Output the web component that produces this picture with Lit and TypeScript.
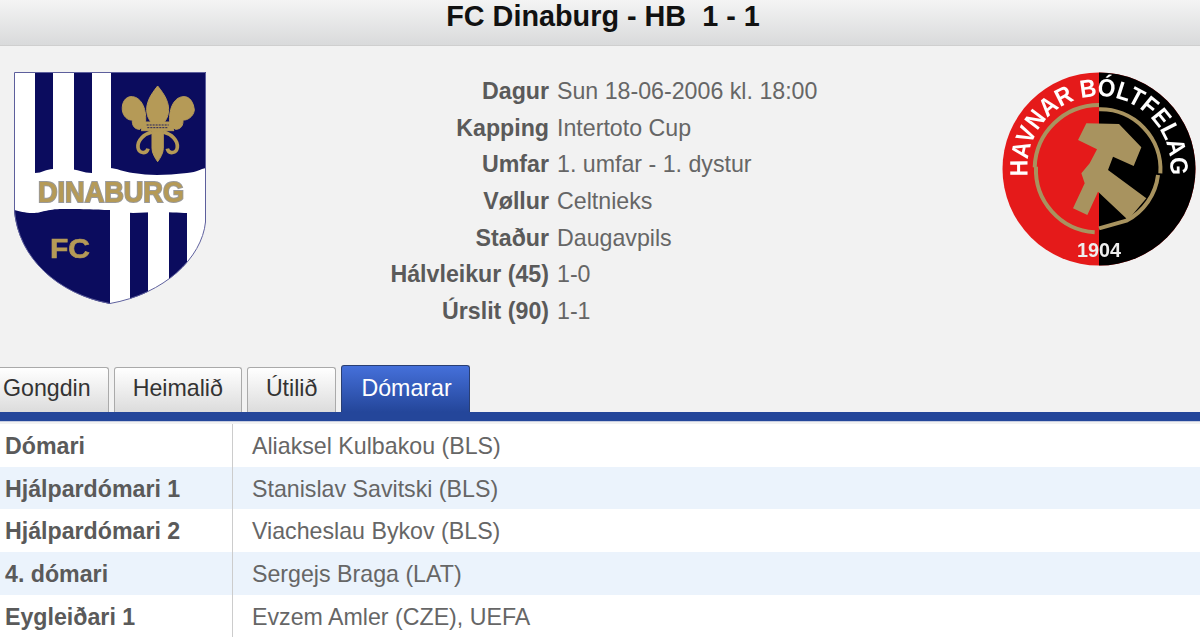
import { LitElement, html, css, svg } from 'lit';
import { customElement, state } from 'lit/decorators.js';

const info = [
    ['Dagur', 'Sun 18-06-2006 kl. 18:00'],
    ['Kapping', 'Intertoto Cup'],
    ['Umfar', '1. umfar - 1. dystur'],
    ['Vøllur', 'Celtnieks'],
    ['Staður', 'Daugavpils'],
    ['Hálvleikur (45)', '1-0'],
    ['Úrslit (90)', '1-1'],
];

const referees = [
    ['Dómari', 'Aliaksel Kulbakou (BLS)'],
    ['Hjálpardómari 1', 'Stanislav Savitski (BLS)'],
    ['Hjálpardómari 2', 'Viacheslau Bykov (BLS)'],
    ['4. dómari', 'Sergejs Braga (LAT)'],
    ['Eygleiðari 1', 'Evzem Amler (CZE), UEFA'],
];

const tabs = ['Gongdin', 'Heimalið', 'Útilið', 'Dómarar'];

// coordinates below are taken from the 3x crops, hence the scale(.3333)
const dinaburgLogo = svg`
  <svg class="logo" width="192" height="233" viewBox="0 0 192 233">
    <defs>
      <clipPath id="shield"><path d="M0 0H192V150C188 186 150 222 96 232C44 222 4 186 0 138Z"/></clipPath>
    </defs>
    <g clip-path="url(#shield)">
      <rect width="192" height="233" fill="#fff"/>
      <rect x="21" width="18" height="108" fill="#0b0c5e"/>
      <rect x="60" width="18" height="108" fill="#0b0c5e"/>
      <rect x="97" width="95" height="108" fill="#0b0c5e"/>
      <rect y="130" width="96" height="103" fill="#0b0c5e"/>
      <rect x="116" y="130" width="18" height="103" fill="#0b0c5e"/>
      <rect x="155" y="130" width="18" height="103" fill="#0b0c5e"/>
      <path fill="#fff" d="M0 97C8 98 14 101 21 101S32 97 39 97 50 97 56 97 70 101 78 101 90 96 96 96 110 100 119 101 134 103 143 103 162 102 173 101 186 97 192 96V136C186 138 180 141 173 141S152 140 143 140 128 141 119 141 104 138 96 138 66 137 49 137 28 141 19 141 6 139 0 138Z"/>
    </g>
    <path d="M.5 .5H191.500V150C188 186 150 222 96 231.500C44 222 4 186 .5 138Z" fill="none" stroke="#5d5f9c" stroke-width="1"/>
    <text class="dina" x="97" y="130" text-anchor="middle" textLength="146" lengthAdjust="spacingAndGlyphs">DINABURG</text>
    <text class="fc" x="56" y="186" text-anchor="middle" textLength="40" lengthAdjust="spacingAndGlyphs">FC</text>
    <g transform="translate(-14 -12) scale(.3333)" fill="#b59a57" stroke="#b59a57" stroke-width="3">
      <path d="M473 78C495 105 510 130 505 160C502 178 492 185 490 195V265C490 280 480 295 473 305C466 295 456 280 456 265V195C454 185 444 178 441 160C436 130 451 105 473 78Z"/>
      <path d="M436 192C442 150 425 112 397 110C375 108 365 130 367 150C369 170 385 182 397 180C396 195 402 208 420 208Z"/>
      <path d="M510 192C504 150 521 112 549 110C571 108 581 130 583 150C581 170 561 182 549 180C550 195 544 208 526 208Z"/>
      <rect x="425" y="186" width="96" height="26"/>
      <path d="M440 195h66M442 203h62" stroke="#0b0c5e" stroke-width="2.500" stroke-dasharray="6 3" fill="none"/>
      <path d="M456 216C432 222 412 240 414 262C416 280 440 284 444 266" fill="none" stroke-width="11"/>
      <path d="M490 216C514 222 534 240 532 262C530 280 506 284 502 266" fill="none" stroke-width="11"/>
    </g>
  </svg>`;

const hbLogo = svg`
  <svg class="logo" width="194" height="194" viewBox="0 0 194 194">
    <defs>
      <path id="arc" d="M26 104A71.500 71.500 0 1 1 168 104"/>
      <clipPath id="right"><rect x="97" width="97" height="194"/></clipPath>
    </defs>
    <circle cx="97" cy="97" r="96.500" fill="#e51a1a"/>
    <circle cx="97" cy="97" r="96.500" fill="#000" clip-path="url(#right)"/>
    <g transform="translate(-12.300 -12) scale(.3333)">
      <path d="M135 322A193 193 0 0 1 328 135M328 148A180 180 0 0 1 512 340" fill="none" stroke="#a8935f" stroke-width="12"/>
      <path d="M139 320A188 188 0 0 0 315 517M328 505L410 482A178 178 0 0 0 505 345" fill="none" stroke="#a8935f" stroke-width="12"/>
      <path fill="#a8935f" d="M290 190L388 192L455 262L432 318L370 290L355 330L470 415L415 480L325 395L293 465L250 445L285 370L275 340L300 310L322 268L265 240Z"/>
    </g>
    <text class="ring"><textPath href="#arc" startOffset="0" textLength="240" lengthAdjust="spacingAndGlyphs">HAVNAR BÓLTFELAG</textPath></text>
    <text class="year" x="97" y="185" text-anchor="middle" textLength="44" lengthAdjust="spacingAndGlyphs">1904</text>
  </svg>`;

@customElement('app-root')
export class AppRoot extends LitElement {
    static styles = css`
    :host {
      display: block;
      height: 637px;
      overflow: hidden;
      background: #f2f2f2;
      font-family: "Liberation Sans", Arial, sans-serif;
      font-size: 23.200px;
      color: #666;
    }
    .title {
      height: 45px;
      padding-left: 6px;
      border-bottom: 1px solid #cfcfcf;
      background: linear-gradient(#f4f4f4, #d9dadb);
      text-align: center;
      font-size: 28.800px;
      line-height: 32px;
      font-weight: bold;
      color: #111;
      white-space: pre;
    }
    .match {
      display: flex;
      align-items: flex-start;
      height: 319px;
      padding: 26px 4px 0 14px;
      box-sizing: border-box;
    }
    .logo {
      display: block;
      flex: none;
      filter: blur(0.5px);
    }
    .dina {
      font: bold 29px "Liberation Sans", sans-serif;
      fill: #b59a57;
      stroke: #9a9a9a;
      stroke-width: 2px;
      paint-order: stroke;
    }
    .fc {
      font: bold 27px "Liberation Sans", sans-serif;
      fill: #b59a57;
      stroke: #b59a57;
      stroke-width: 0.6px;
    }
    .ring {
      font: bold 25px "Liberation Sans", sans-serif;
      fill: #fff;
    }
    .year {
      font: bold 21px "Liberation Sans", sans-serif;
      fill: #eee;
    }
    .info {
      display: grid;
      grid-template-columns: 343px auto;
      column-gap: 8px;
      grid-auto-rows: 36.700px;
      align-items: center;
      flex: 1;
      margin-top: 1px;
    }
    .info .label {
      text-align: right;
      font-weight: bold;
      color: #5a5a5a;
    }
    .tabs {
      display: flex;
      align-items: flex-end;
      gap: 5px;
      height: 47px;
    }
    .tab {
      height: 45px;
      box-sizing: border-box;
      padding: 0 18px;
      line-height: 40px;
      color: #333;
      background: linear-gradient(#fff, #dcdcdc);
      border: 1px solid #aaa;
      border-bottom: 0;
      border-radius: 3px 3px 0 0;
    }
    .tab:first-child {
      padding: 0 17px 0 3px;
      border-left: 0;
      border-radius: 0 3px 0 0;
    }
    .tab.active {
      height: 47px;
      padding: 0 17px 0 19px;
      color: #fff;
      background: linear-gradient(#4570da, #24469a);
      border-color: #2a3f73;
      line-height: 44px;
    }
    .bar {
      height: 9px;
      background: #24469a;
      border-bottom: 1px solid #c7cde0;
      margin-bottom: 2px;
    }
    .rows {
      background: #fff;
    }
    .row {
      display: grid;
      grid-template-columns: 233px 1fr;
      height: 42.700px;
    }
    .row:nth-child(even) {
      background: #ebf3fc;
    }
    .row div {
      line-height: 44px;
    }
    .row .name {
      padding-left: 5px;
      border-right: 1px solid #ccc;
      font-weight: bold;
      color: #5a5a5a;
    }
    .row .val {
      padding-left: 19px;
    }
  `;

    @state()
    activeTab = 3;

    render() {
        return html`
      <div class="title">FC Dinaburg - HB  1 - 1</div>
      <div class="match">
        ${dinaburgLogo}
        <div class="info">
          ${info.map(([label, value]) => html`<div class="label">${label}</div><div>${value}</div>`)}
        </div>
        ${hbLogo}
      </div>
      <div class="tabs">
        ${tabs.map((t, i) => html`<div class="tab ${i === this.activeTab ? 'active' : ''}">${t}</div>`)}
      </div>
      <div class="bar"></div>
      <div class="rows">
        ${referees.map(([name, value]) => html`
          <div class="row"><div class="name">${name}</div><div class="val">${value}</div></div>
        `)}
      </div>
    `;
    }
}
